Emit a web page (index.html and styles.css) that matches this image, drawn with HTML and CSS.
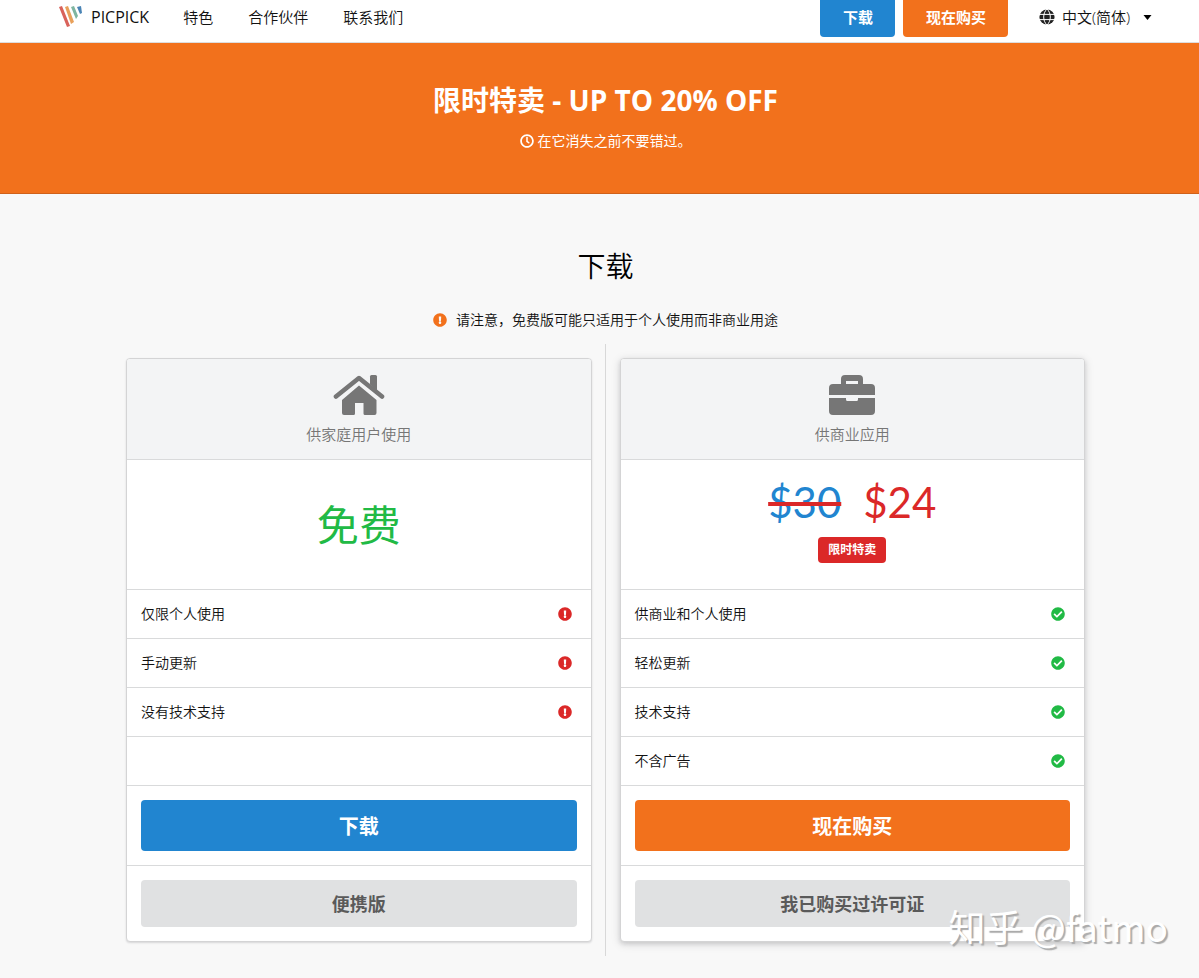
FILE: index.html
```html
<!DOCTYPE html>
<html lang="zh-CN">
<head>
<meta charset="utf-8">
<meta name="viewport" content="width=device-width, initial-scale=1">
<title>PicPick 下载</title>
<link rel="stylesheet" href="styles.css">
</head>
<body>
<svg class="symbols" aria-hidden="true">
  <symbol id="warn" viewBox="0 0 512 512"><path d="M504 256c0 136.997-111.043 248-248 248S8 392.997 8 256C8 119.083 119.043 8 256 8s248 111.083 248 248zm-248 50c-25.405 0-46 20.595-46 46s20.595 46 46 46 46-20.595 46-46-20.595-46-46-46zm-43.673-165.346l7.418 136c.347 6.364 5.609 11.346 11.982 11.346h48.546c6.373 0 11.635-4.982 11.982-11.346l7.418-136c.375-6.874-5.098-12.654-11.982-12.654h-63.383c-6.884 0-12.356 5.78-11.981 12.654z"/></symbol>
  <symbol id="check" viewBox="0 0 512 512"><path d="M504 256c0 136.967-111.033 248-248 248S8 392.967 8 256 119.033 8 256 8s248 111.033 248 248zM227.314 387.314l184-184c6.248-6.248 6.248-16.379 0-22.627l-22.627-22.627c-6.248-6.249-16.379-6.249-22.628 0L216 308.118l-70.059-70.059c-6.248-6.248-16.379-6.248-22.628 0l-22.627 22.627c-6.248 6.248-6.248 16.379 0 22.627l104 104c6.249 6.249 16.379 6.249 22.628.001z"/></symbol>
</svg>

<header class="topbar">
  <div class="container topbar-inner">
    <a class="brand" href="#">
      <svg class="logo" viewBox="0 0 24 24" aria-hidden="true">
        <path fill="#d9625a" d="M0 2l3-1 8 20-3 1z"/>
        <path fill="#e8a05a" d="M6 2l3-1 6 16-3 2z"/>
        <path fill="#7fb5a0" d="M12 2l3-1 4 10-2 3z"/>
        <path fill="#4a84b5" d="M18 2l4-1 1 7-2 1z"/>
      </svg>
      <span>PICPICK</span>
    </a>
    <nav class="menu">
      <a href="#">特色</a>
      <a href="#">合作伙伴</a>
      <a href="#">联系我们</a>
    </nav>
    <div class="actions">
      <a class="button small blue" href="#">下载</a>
      <a class="button small orange" href="#">现在购买</a>
    </div>
    <label class="language">
      <svg class="globe" viewBox="0 0 16 16" aria-hidden="true">
        <circle cx="8" cy="8" r="7.6" fill="#222"/>
        <path fill="none" stroke="#fff" stroke-width="1" d="M0 5.4h16M0 10.6h16M8 0C3.6 4 3.6 12 8 16M8 0c4.400 4 4.400 12 0 16"/>
      </svg>
      <select aria-label="语言"><option>中文(简体)</option></select>
      <svg class="caret" viewBox="0 0 8 5" aria-hidden="true"><path d="M0 0h8L4 5z"/></svg>
    </label>
  </div>
</header>

<section class="banner">
  <h2>限时特卖 - UP TO 20% OFF</h2>
  <p>
    <svg class="icon" viewBox="0 0 512 512" aria-hidden="true"><path d="M256 8C119 8 8 119 8 256s111 248 248 248 248-111 248-248S393 8 256 8zm0 432c-101 0-184-83-184-184S155 72 256 72s184 83 184 184-83 184-184 184zm61.800-88.400l-84.900-61.700c-3.100-2.300-4.900-5.900-4.900-9.700V116c0-6.600 5.400-12 12-12h32c6.600 0 12 5.400 12 12v141.700l66.800 48.600c5.400 3.900 6.500 11.400 2.600 16.800L334.600 349c-3.900 5.300-11.400 6.500-16.800 2.600z"/></svg>
    在它消失之前不要错过。
  </p>
</section>

<main class="content">
  <h1>下载</h1>
  <p class="notice"><svg class="icon" aria-hidden="true"><use href="#warn"/></svg>请注意，免费版可能只适用于个人使用而非商业用途</p>

  <div class="plans">
    <section class="card">
      <header class="card-head">
        <svg class="card-icon" viewBox="0 0 52 40" aria-hidden="true">
          <path fill="none" stroke="#767676" stroke-width="4.600" stroke-linecap="round" stroke-linejoin="round" d="M3 21.500L26 3l23 18.500"/>
          <path d="M37 1.500Q37 0 38.500 0h4Q44 0 44 1.500v14l-7-6z"/>
          <path d="M26 10.500L43.500 25v13q0 2-2 2H32q-1.500 0-1.500-1.500V28h-8.500v10.500q0 1.500-1.500 1.500h-9.500q-2 0-2-2V25z"/>
        </svg>
        <h3>供家庭用户使用</h3>
      </header>
      <div class="price"><span class="free">免费</span></div>
      <ul class="features">
        <li>仅限个人使用<svg class="icon bad" aria-hidden="true"><use href="#warn"/></svg></li>
        <li>手动更新<svg class="icon bad" aria-hidden="true"><use href="#warn"/></svg></li>
        <li>没有技术支持<svg class="icon bad" aria-hidden="true"><use href="#warn"/></svg></li>
        <li></li>
      </ul>
      <div class="cta"><a class="button big blue" href="#">下载</a></div>
      <div class="cta"><a class="button large grey" href="#">便携版</a></div>
    </section>

    <div class="divider"></div>

    <section class="card raised">
      <header class="card-head">
        <svg class="card-icon" viewBox="0 0 46 40" aria-hidden="true">
          <path fill-rule="evenodd" d="M12 9V4q0-4 4-4h14q4 0 4 4v5h8q4 0 4 4v7H0v-7q0-4 4-4zM17 9h12V6H17z"/>
          <path d="M0 23h17v1.500Q17 26 18.500 26h9Q29 26 29 24.500V23h17v13q0 4-4 4H4q-4 0-4-4z"/>
        </svg>
        <h3>供商业应用</h3>
      </header>
      <div class="price offer">
        <div class="amounts"><del>$30</del><ins>$24</ins></div>
        <span class="tag">限时特卖</span>
      </div>
      <ul class="features">
        <li>供商业和个人使用<svg class="icon good" aria-hidden="true"><use href="#check"/></svg></li>
        <li>轻松更新<svg class="icon good" aria-hidden="true"><use href="#check"/></svg></li>
        <li>技术支持<svg class="icon good" aria-hidden="true"><use href="#check"/></svg></li>
        <li>不含广告<svg class="icon good" aria-hidden="true"><use href="#check"/></svg></li>
      </ul>
      <div class="cta"><a class="button big orange" href="#">现在购买</a></div>
      <div class="cta"><a class="button large grey" href="#">我已购买过许可证</a></div>
    </section>
  </div>
</main>
<div class="watermark">知乎 @fatmo</div>
</body>
</html>
```
FILE: styles.css
```css
* { box-sizing: border-box; }
body {
  margin: 0;
  position: relative;
  background: #f8f8f8;
  color: #111;
  font: 350 14px/20px "Open Sans", "Noto Sans CJK SC", sans-serif;
}
h1, h2, h3, p, ul { margin: 0; padding: 0; }
a { color: inherit; text-decoration: none; }
.symbols { display: none; }
.icon { width: 14px; height: 14px; fill: currentColor; flex: none; }

.topbar {
  padding-left: 12px;
  background: #fff;
  border-bottom: 1px solid #ddd;
  font-size: 15px;
}
.container { max-width: 1093px; margin: 0 auto; }
.topbar-inner { display: flex; height: 42px; padding-bottom: 8px; align-items: center; }
.brand { display: flex; align-items: center; gap: 8px; font-size: 16px; font-weight: 400; }
.logo { width: 24px; height: 24px; }
.menu { display: flex; gap: 35px; margin-left: 34px; }
.actions { display: flex; gap: 8px; margin-left: auto; align-self: flex-start; }
.language { display: flex; align-items: center; margin-left: 31px; }
.globe { width: 16px; height: 16px; }
.language select {
  appearance: none;
  border: 0;
  margin: 0 12px 0 7px;
  padding: 0;
  background: none;
  color: inherit;
  font: inherit;
}
.caret { width: 9px; height: 5px; }

.button {
  display: flex;
  align-items: center;
  justify-content: center;
  border-radius: 4px;
  color: #fff;
  font-weight: 700;
}
.small { height: 37px; padding: 0 22px 4px 23px; border-radius: 0 0 4px 4px; }
.big { height: 51px; padding-top: 3px; font-size: 20px; }
.large { height: 47px; font-size: 18px; }
.blue { background: #2185d0; }
.orange { background: #f2711c; }
.grey { background: #e0e1e2; color: #5a5a5a; }

.banner {
  padding: 39px 0 42px 12px;
  background: #f2711c;
  border-bottom: 1px solid #d0611a;
  color: #fff;
  text-align: center;
}
.banner h2 { font-size: 28px; line-height: 36px; font-weight: 700; }
.banner p { display: flex; justify-content: center; align-items: center; gap: 4px; margin-top: 13px; font-weight: 400; }

.content { padding: 52px 0 22px 12px; }
h1 { color: #000; font-size: 28px; line-height: 40px; font-weight: 350; text-align: center; }
.notice { display: flex; justify-content: center; align-items: center; gap: 9px; margin-top: 24px; }
.notice .icon { color: #f2711c; }

.plans { display: grid; grid-template-columns: 1fr 28px 1fr; max-width: 959px; margin: 14px auto 0; }
.divider { width: 1px; background: #d8d8d8; justify-self: center; }
.card {
  margin: 14px 0;
  background: #fff;
  border: 1px solid #d4d4d5;
  border-radius: 4px;
  box-shadow: 0 1px 2px rgba(34, 36, 38, .15);
  overflow: hidden;
}
.raised { box-shadow: 0 2px 4px rgba(34, 36, 38, .12), 0 2px 10px rgba(34, 36, 38, .15); }
.card-head {
  display: flex;
  flex-direction: column;
  align-items: center;
  height: 100px;
  padding-top: 16px;
  background: #f3f4f5;
  color: #767676;
}
.card-icon { height: 40px; fill: #767676; }
h3 { margin-top: 9px; font-size: 15px; line-height: 20px; font-weight: 350; }
.price {
  display: flex;
  flex-direction: column;
  align-items: center;
  justify-content: center;
  height: 130px;
  border-top: 1px solid #d9dadb;
}
.offer { padding-bottom: 10px; }
.free { color: #21ba45; font-size: 42px; line-height: 56px; font-weight: 400; }
.amounts { display: flex; gap: 22px; font: 400 42px/50px Lato, sans-serif; }
del { color: #2185d0; text-decoration: line-through 4px #db2828; }
ins { color: #db2828; text-decoration: none; }
.tag { margin-top: 10px; padding: 3px 10px; border-radius: 4px; background: #db2828; color: #fff; font-size: 12px; font-weight: 700; }
.features { list-style: none; }
.features li {
  display: flex;
  align-items: center;
  justify-content: space-between;
  height: 49px;
  padding: 0 19px 0 14px;
  border-top: 1px solid #d9dadb;
}
.bad { color: #db2828; }
.good { color: #21ba45; }
.cta { padding: 14px; border-top: 1px solid #d9dadb; }

.watermark {
  position: absolute;
  right: 31px;
  bottom: 28px;
  color: #fff;
  font: 400 37px/48px "Noto Sans CJK SC", sans-serif;
  text-shadow: 2px 2px 1px #aaa;
}
```
